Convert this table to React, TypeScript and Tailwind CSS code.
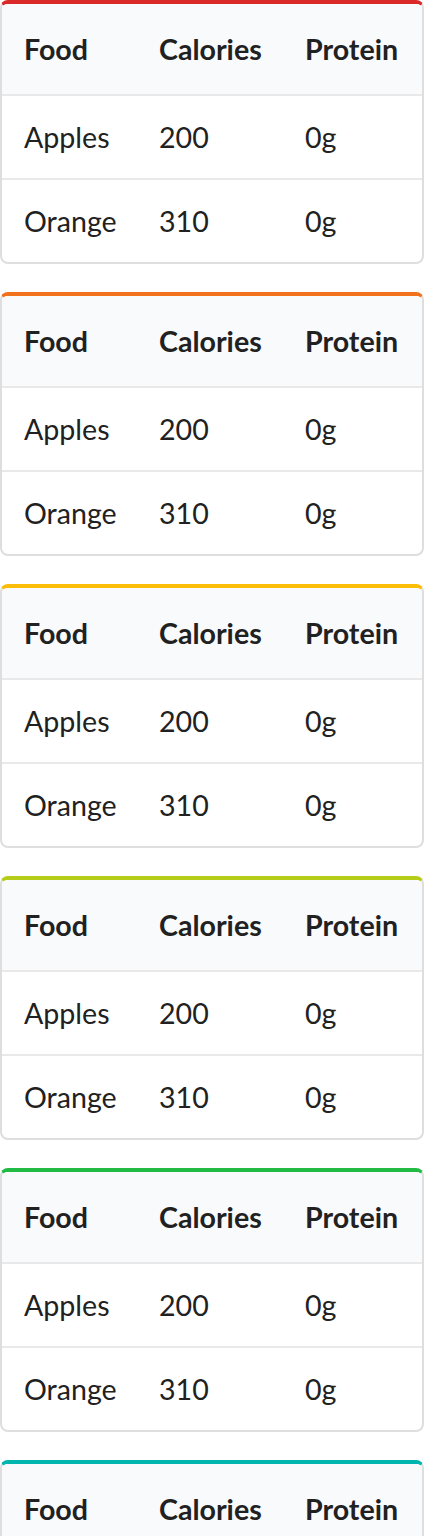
import React from "react";

const colors = [
  "border-t-[#db2828]",
  "border-t-[#f2711c]",
  "border-t-[#fbbd08]",
  "border-t-[#b5cc18]",
  "border-t-[#21ba45]",
  "border-t-[#00b5ad]",
];

const rows = [
  ["Apples", "200", "0g"],
  ["Orange", "310", "0g"],
];

function Table({ color }: { color: string }) {
  return (
    <div
      className={`mb-[28px] rounded-lg border-2 border-t-4 border-[#dededf] ${color} bg-white overflow-hidden text-[#212121]`}
    >
      <div className="grid grid-cols-[135px_146px_1fr] bg-[#f9fafb] font-bold">
        {["Food", "Calories", "Protein"].map((h) => (
          <div key={h} className="pl-[22px] py-[26px] leading-[38px] whitespace-nowrap">
            {h}
          </div>
        ))}
      </div>
      {rows.map((r, i) => (
        <div
          key={i}
          className="grid grid-cols-[135px_146px_1fr] border-t-2 border-[#e9e9ea]"
        >
          {r.map((c, j) => (
            <div key={j} className="pl-[22px] py-[22px] leading-[38px] whitespace-nowrap">
              {c}
            </div>
          ))}
        </div>
      ))}
    </div>
  );
}

export default function App() {
  return (
    <div
      className="w-[424px] text-[28.6px] bg-white"
      style={{ fontFamily: "Lato, 'Helvetica Neue', Arial, sans-serif" }}
    >
      {colors.map((c, i) => (
        <Table key={i} color={c} />
      ))}
    </div>
  );
}
